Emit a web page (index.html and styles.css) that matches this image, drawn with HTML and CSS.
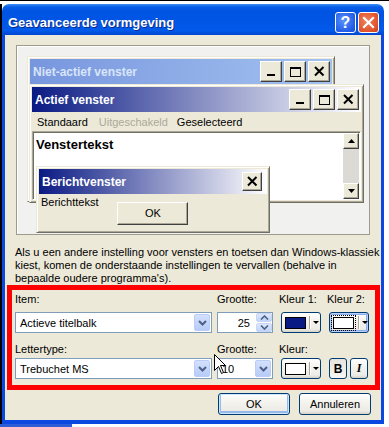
FILE: index.html
```html
<!DOCTYPE html>
<html lang="nl">

<head>
    <meta charset="UTF-8">
    <title>Geavanceerde vormgeving</title>
    <link rel="stylesheet" href="styles.css">
</head>

<body>
    <div class="screen">
        <div class="dialog">
            <div class="titlebar">
                <span class="title">Geavanceerde vormgeving</span>
                <span class="tb help">?</span>
                <span class="tb close">
                    <svg width="13" height="13" viewBox="0 0 13 13">
                        <path d="M2 2 L11 11 M11 2 L2 11" stroke="#fff" stroke-width="2.2" stroke-linecap="square" />
                    </svg>
                </span>
            </div>

            <div class="frame">
                <div class="body">
                    <!-- voorbeeld: vensters liggen over elkaar -->
                    <div class="preview">
                        <div class="win inactive">
                            <div class="capbar">
                                <span class="captext">Niet-actief venster</span>
                                <span class="cbtn"><svg width="20" height="19"><rect x="6" y="12" width="8" height="2" /></svg></span>
                                <span class="cbtn"><svg width="20" height="19"><rect x="5.5" y="5.5" width="10" height="9" fill="none" stroke="#000" /><rect x="5" y="5" width="11" height="2" /></svg></span>
                                <span class="cbtn"><svg width="20" height="19"><path d="M6 5 L14.5 13.5 M14.5 5 L6 13.5" stroke="#000" stroke-width="2" /></svg></span>
                            </div>
                        </div>

                        <div class="win active">
                            <div class="capbar">
                                <span class="captext">Actief venster</span>
                                <span class="cbtn"><svg width="20" height="19"><rect x="6" y="12" width="8" height="2" /></svg></span>
                                <span class="cbtn"><svg width="20" height="19"><rect x="5.5" y="5.5" width="10" height="9" fill="none" stroke="#000" /><rect x="5" y="5" width="11" height="2" /></svg></span>
                                <span class="cbtn"><svg width="20" height="19"><path d="M6 5 L14.5 13.5 M14.5 5 L6 13.5" stroke="#000" stroke-width="2" /></svg></span>
                            </div>
                            <div class="menu">
                                <span>Standaard</span>
                                <span class="disabled">Uitgeschakeld</span>
                                <span class="sel">Geselecteerd</span>
                            </div>
                            <div class="client">
                                <div class="wintext">Venstertekst</div>
                                <div class="scroll">
                                    <span class="sbtn"><svg width="7" height="4"><path d="M0 4 L3.5 0 L7 4Z" /></svg></span>
                                    <span class="track"></span>
                                    <span class="sbtn"><svg width="7" height="4"><path d="M0 0 L3.5 4 L7 0Z" /></svg></span>
                                </div>
                            </div>
                        </div>

                        <div class="win msg">
                            <div class="capbar">
                                <span class="captext">Berichtvenster</span>
                                <span class="cbtn small"><svg width="18" height="17"><path d="M5 4 L13.5 12.5 M13.5 4 L5 12.5" stroke="#000" stroke-width="2" /></svg></span>
                            </div>
                            <div class="msgbody">
                                <span>Berichttekst</span>
                                <span class="okbtn">OK</span>
                            </div>
                        </div>
                    </div>

                    <p class="note">Als u een andere instelling voor vensters en toetsen dan Windows-klassiek<br>kiest, komen de onderstaande instellingen te vervallen (behalve in<br>bepaalde oudere programma's).</p>

                    <div class="settings">
                        <span class="lbl">Item:</span>
                        <span class="lbl">Grootte:</span>
                        <span class="lbl k">Kleur 1:</span>
                        <span class="lbl k">Kleur 2:</span>

                        <div class="combo wide">
                            <span class="val">Actieve titelbalk</span>
                            <span class="drop"><svg width="9" height="6"><path d="M1 1 L4.5 4.5 L8 1" fill="none" stroke="#4d6185" stroke-width="2" /></svg></span>
                        </div>
                        <div class="combo size">
                            <span class="val num">25</span>
                            <span class="spin">
                                <span class="half"><svg width="9" height="5"><path d="M1 4.5 L4.5 1 L8 4.5" fill="none" stroke="#4d6185" stroke-width="1.6" /></svg></span>
                                <span class="half"><svg width="9" height="5"><path d="M1 0.5 L4.5 4 L8 0.5" fill="none" stroke="#4d6185" stroke-width="1.6" /></svg></span>
                            </span>
                        </div>
                        <div class="xbtn colorbtn">
                            <span class="swatch navy"></span><span class="sep"></span><span class="arrow"></span>
                        </div>
                        <div class="xbtn colorbtn focus">
                            <span class="focusring"><span class="swatch"></span></span><span class="sep"></span><span class="arrow"></span>
                        </div>

                        <span class="lbl">Lettertype:</span>
                        <span class="lbl">Grootte:</span>
                        <span class="lbl k">Kleur:</span>
                        <span></span>

                        <div class="combo wide">
                            <span class="val">Trebuchet MS</span>
                            <span class="drop"><svg width="9" height="6"><path d="M1 1 L4.5 4.5 L8 1" fill="none" stroke="#4d6185" stroke-width="2" /></svg></span>
                        </div>
                        <div class="combo size">
                            <span class="val">10</span>
                            <span class="drop"><svg width="9" height="6"><path d="M1 1 L4.5 4.5 L8 1" fill="none" stroke="#4d6185" stroke-width="2" /></svg></span>
                        </div>
                        <div class="xbtn colorbtn">
                            <span class="swatch"></span><span class="sep"></span><span class="arrow"></span>
                        </div>
                        <div class="styles">
                            <span class="xbtn sq pressed"><b>B</b></span>
                            <span class="xbtn sq"><i>I</i></span>
                        </div>
                    </div>

                    <div class="actions">
                        <span class="xbtn act default">OK</span>
                        <span class="xbtn act">Annuleren</span>
                    </div>
                </div>
            </div>
        </div>
        <div class="taskbar"></div>

        <!-- muisaanwijzer boven het lettergrootte-veld -->
        <svg class="cursor" width="13" height="21" viewBox="0 0 13 21">
            <path d="M0.5 0.5 L0.5 16.5 L4.5 12.5 L7.5 19.5 L9.5 18.5 L6.5 11.5 L11.5 11.5 Z" fill="#fff" stroke="#000" />
        </svg>
    </div>
</body>

</html>
```

FILE: styles.css
```css
* {
    margin: 0;
    padding: 0;
    box-sizing: border-box;
}

body {
    background: #fff;
    font-family: "Liberation Sans", Arial, sans-serif;
    font-size: 11px;
    color: #000;
}

.screen {
    position: relative;
    width: 389px;
    height: 427px;
    border-top: 1px solid #000;
    padding-top: 3px;
    overflow: hidden;
}

.dialog {
    width: 384px;
    border-left: 2px solid #000;
}

/* blauwe titelbalk */
.titlebar {
    height: 31px;
    display: flex;
    align-items: center;
    padding: 6px 5px 0 6px;
    border-radius: 7px 7px 0 0;
    background: linear-gradient(180deg, #3d8ef5 0, #0a5fe8 3px, #0054e2 7px, #0055e5 55%, #025aea 85%, #0045d0 100%);
}

.title {
    flex: 1;
    color: #fff;
    font-weight: bold;
    font-size: 13px;
    text-shadow: 1px 1px #0a2a8a;
}

.tb {
    width: 21px;
    height: 21px;
    margin-left: 2px;
    border: 1px solid #fff;
    border-radius: 3px;
    display: flex;
    align-items: center;
    justify-content: center;
    color: #fff;
    font-weight: bold;
    font-size: 16px;
}

.help {
    background: radial-gradient(circle at 40% 40%, #5b93fb, #245de8 70%, #1a4fd6);
}

.close {
    background: radial-gradient(circle at 40% 40%, #f0825c, #e0522b 70%, #c8401c);
}

.frame {
    background: #0a48e0;
    padding: 0 3px 4px;
}

.body {
    background: #ece9d8;
    height: 385px;
    padding-top: 10px;
}

/* voorbeeldvak */
.preview {
    position: relative;
    margin-left: 11px;
    width: 354px;
    height: 190px;
    border: 1px solid #9d9b8d;
    box-shadow: inset 1px 1px #fff;
    background: #f1f1ef;
}

.win {
    position: absolute;
    display: flex;
    flex-direction: column;
    background: #ece9d8;
    border: 1px solid;
    border-color: #ece9d8 #716f64 #716f64 #ece9d8;
    box-shadow: inset 1px 1px #fff, inset -1px -1px #aca899;
    padding: 2px;
}

.inactive {
    left: 10px;
    top: 10px;
    width: 308px;
    height: 146px;
}

.active {
    left: 12px;
    top: 38px;
    width: 335px;
    height: 119px;
}

.msg {
    left: 19px;
    top: 120px;
    width: 234px;
    height: 67px;
}

.capbar {
    height: 25px;
    display: flex;
    align-items: center;
    padding: 0 2px 0 3px;
    color: #fff;
    font-weight: bold;
    font-size: 12px;
    background: linear-gradient(90deg, #0a1a84, #fff);
}

.inactive .capbar {
    background: linear-gradient(90deg, #7896de, #a3c2f0);
    color: #d9e5f9;
}

.captext {
    flex: 1;
}

.cbtn {
    width: 22px;
    height: 21px;
    margin-left: 2px;
    display: flex;
    align-items: center;
    justify-content: center;
    background: #ece9d8;
    border: 1px solid;
    border-color: #fff #404040 #404040 #fff;
    box-shadow: inset -1px -1px #aca899;
}

.cbtn.small {
    width: 20px;
    height: 19px;
    margin-right: 3px;
}

.menu {
    height: 19px;
    display: flex;
    align-items: center;
    gap: 11px;
    padding-left: 5px;
}

.menu .sel {
    margin-left: -2px;
}

.disabled {
    color: #aca899;
}

.client {
    flex: 1;
    display: flex;
    background: #fff;
    border: 1px solid;
    border-color: #aca899 #fff #fff #aca899;
    box-shadow: inset 1px 1px #716f64;
}

.wintext {
    flex: 1;
    padding: 5px 0 0 3px;
    font-weight: bold;
    font-size: 13px;
}

.scroll {
    width: 16px;
    display: flex;
    flex-direction: column;
    margin: 1px 1px 0 0;
}

.sbtn {
    height: 16px;
    display: flex;
    align-items: center;
    justify-content: center;
    background: #ece9d8;
    border: 1px solid;
    border-color: #fff #404040 #404040 #fff;
    box-shadow: inset -1px -1px #aca899;
}

.track {
    flex: 1;
    background: #dcdad4;
}

.msgbody {
    display: flex;
    align-items: flex-start;
    padding: 2px 0 0 2px;
    line-height: 13px;
}

.okbtn {
    width: 71px;
    height: 23px;
    margin: 6px 0 0 19px;
    display: flex;
    align-items: center;
    justify-content: center;
    background: #ece9d8;
    border: 1px solid;
    border-color: #fff #404040 #404040 #fff;
    box-shadow: inset -1px -1px #aca899;
}

.note {
    margin: 11px 0 0 10px;
    line-height: 13px;
}

/* rood omlijnde instellingen */
.settings {
    margin-left: 2px;
    width: 373px;
    height: 105px;
    border: 5px solid #f00;
    padding: 3px 0 0 3px;
    display: grid;
    grid-template-columns: 202px 64px 48px 40px;
    grid-template-rows: 19px 31px 15px 21px;
}

.lbl {
    line-height: 13px;
}

.lbl.k {
    margin-left: -2px;
}

.combo {
    height: 21px;
    display: flex;
    align-items: center;
    border: 1px solid #7f9db9;
    background: #fff;
}

.combo.wide {
    width: 197px;
}

.combo.size {
    width: 56px;
}

.val {
    flex: 1;
    padding-left: 4px;
}

.val.num {
    text-align: right;
    padding-right: 6px;
}

.drop {
    width: 16px;
    height: 17px;
    margin-right: 1px;
    display: flex;
    align-items: center;
    justify-content: center;
    border: 1px solid #bacdf8;
    border-radius: 2px;
    background: linear-gradient(#d3e1fd, #b6cbf7);
}

.spin {
    width: 16px;
    height: 19px;
    display: flex;
    flex-direction: column;
    gap: 1px;
}

.half {
    flex: 1;
    display: flex;
    align-items: center;
    justify-content: center;
    border: 1px solid #c7d6f6;
    border-radius: 2px;
    background: linear-gradient(#dde8fd, #c0d3f8);
}

/* knoppen in XP-stijl */
.xbtn {
    display: flex;
    align-items: center;
    justify-content: center;
    height: 21px;
    border: 1px solid #003c74;
    border-radius: 3px;
    background: linear-gradient(#fff, #f4f3ee 40%, #ecebe6 85%, #d6d0c5);
}

.colorbtn {
    width: 40px;
    justify-content: flex-start;
    padding-left: 3px;
}

.swatch {
    width: 21px;
    height: 12px;
    border: 1px solid #000;
    background: #fff;
}

.swatch.navy {
    background: #0a1a84;
}

.focus {
    box-shadow: inset 0 0 0 1px #b9d1fa, inset 0 0 0 2px #89adf0;
}

.focusring {
    display: flex;
    padding: 1px;
    margin: -2px -1px -2px -2px;
    border: 1px dotted #000;
}

.sep {
    width: 1px;
    height: 13px;
    margin: 0 2px 0 3px;
    background: #aca899;
    box-shadow: 1px 0 #fff;
}

.arrow {
    width: 0;
    height: 0;
    margin-left: 1px;
    border-left: 3px solid transparent;
    border-right: 3px solid transparent;
    border-top: 3px solid #000;
}

.styles {
    display: flex;
    gap: 3px;
}

.sq {
    width: 18px;
    font-size: 12px;
}

.sq i {
    font-family: "Liberation Serif", serif;
    font-weight: bold;
}

.pressed {
    background: linear-gradient(#e5e4dd, #efeee9 60%, #f7f6f2);
}

.actions {
    display: flex;
    justify-content: flex-end;
    gap: 9px;
    margin-top: 3px;
    padding-right: 10px;
}

.act {
    height: 22px;
    width: 72px;
}

.act.default {
    box-shadow: inset 0 0 0 1px #cee7ff, inset 0 -1px 0 2px #98b8ea;
}

.taskbar {
    width: 72px;
    height: 3px;
    background: #2d5ed8;
}

.cursor {
    position: absolute;
    left: 214px;
    top: 353px;
}
```
